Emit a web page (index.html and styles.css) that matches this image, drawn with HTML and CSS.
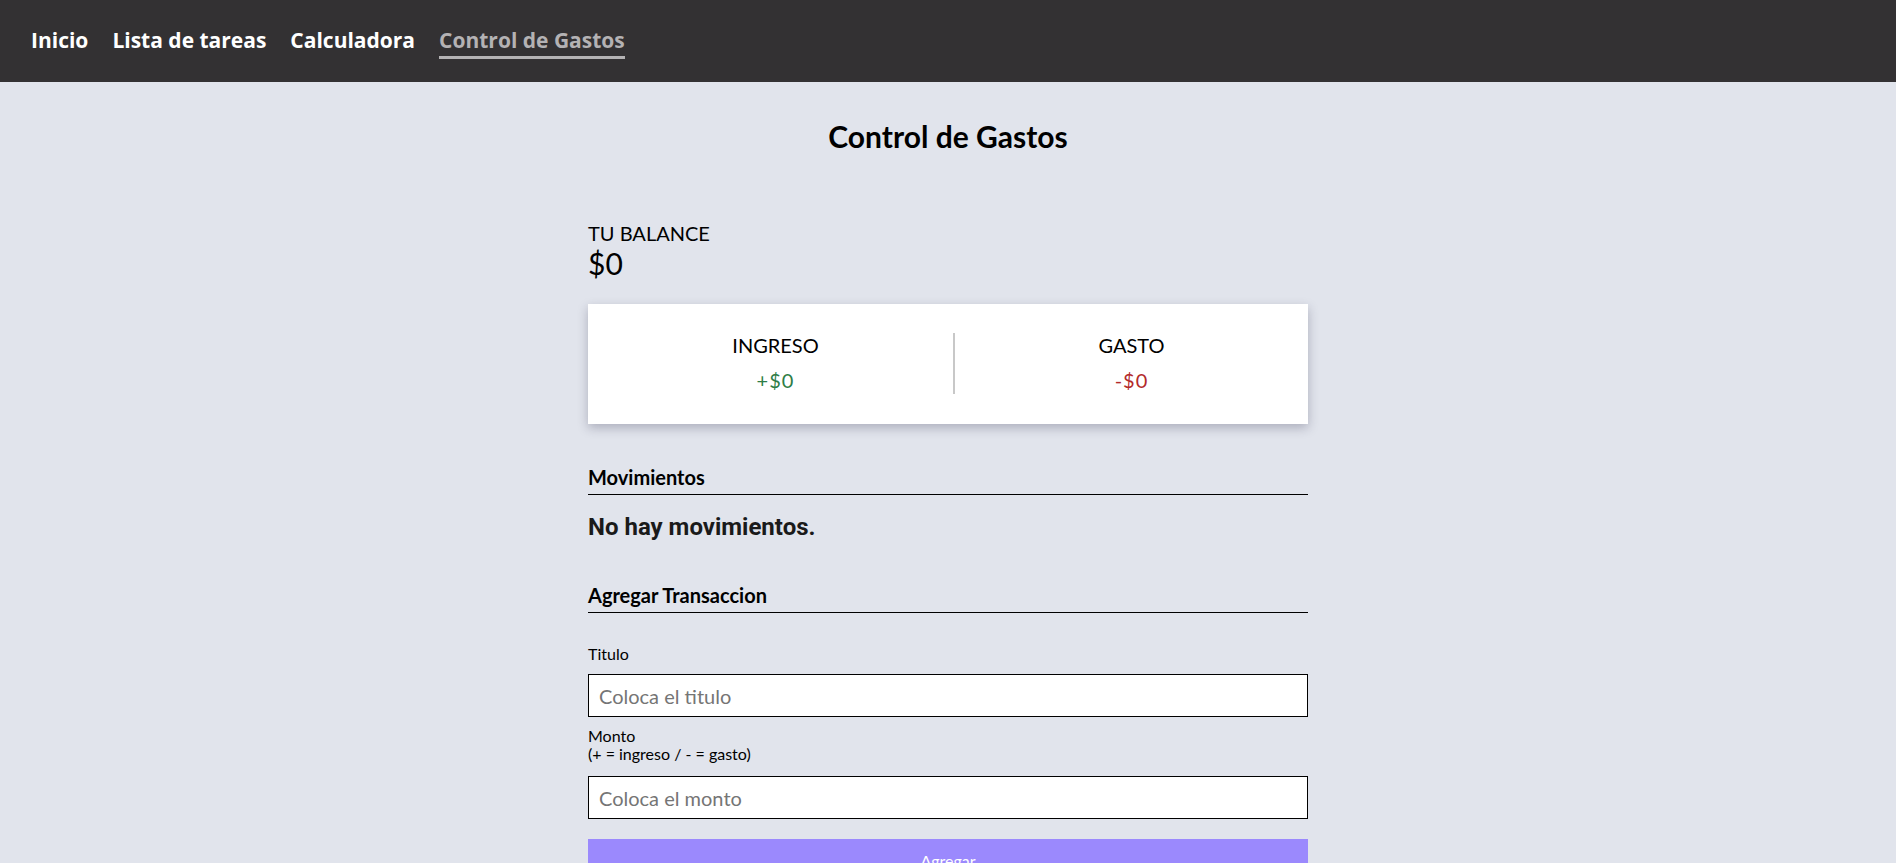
FILE: index.html
```html
<!DOCTYPE html>
<html lang="es">
<head>
<meta charset="utf-8">
<title>Control de Gastos</title>
<link rel="stylesheet" href="styles.css">
</head>
<body>
<nav class="navbar">
  <a class="nav-link" href="#">Inicio</a>
  <a class="nav-link" href="#">Lista de tareas</a>
  <a class="nav-link" href="#">Calculadora</a>
  <a class="nav-link active" href="#">Control de Gastos</a>
</nav>
<main class="app">
  <h1 class="title">Control de Gastos</h1>
  <section class="balance">
    <h4 class="balance-label">TU BALANCE</h4>
    <p class="balance-amount">$0</p>
  </section>
  <section class="summary">
    <div class="summary-col left">
      <h4 class="summary-label">INGRESO</h4>
      <p class="summary-value plus">+$0</p>
    </div>
    <div class="summary-divider"></div>
    <div class="summary-col">
      <h4 class="summary-label">GASTO</h4>
      <p class="summary-value minus">-$0</p>
    </div>
  </section>
  <h3 class="section-title">Movimientos</h3>
  <h3 class="empty">No hay movimientos.</h3>
  <h3 class="section-title add-title">Agregar Transaccion</h3>
  <form class="form">
    <label class="field-label" for="titulo">Titulo</label>
    <input class="field-input" id="titulo" type="text" placeholder="Coloca el titulo">
    <label class="field-label monto" for="monto">Monto<br>(+ = ingreso / - = gasto)</label>
    <input class="field-input monto-input" id="monto" type="text" placeholder="Coloca el monto">
    <button class="btn" type="button">Agregar</button>
  </form>
</main>
</body>
</html>
```
FILE: styles.css
```css
* { box-sizing: border-box; }
body {
  margin: 0;
  background: #e1e4ec;
  font-family: Lato, "Noto Sans", sans-serif;
  color: #000;
}
.navbar {
  height: 82px;
  background: #333133;
  display: flex;
  align-items: center;
  gap: 24px;
  padding-left: 31px;
}
.nav-link {
  font-family: "Open Sans", sans-serif;
  font-weight: bold;
  font-size: 21px;
  color: #fff;
  text-decoration: none;
  padding: 2px 0 2px;
  border-bottom: 3px solid transparent;
}
.nav-link.active {
  color: #b4b2b4;
  border-bottom-color: #b4b2b4;
}
.app {
  width: 720px;
  margin: 0 auto;
}
.title {
  font-size: 30px;
  font-weight: bold;
  text-align: center;
  margin: 36px 0 0;
  line-height: 36px;
}
.balance { margin-top: 67px; }
.balance-label {
  margin: 0;
  font-size: 20px;
  font-weight: normal;
  line-height: 24px;
}
.balance-amount {
  margin: 0;
  font-size: 30px;
  line-height: 36px;
}
.summary {
  margin-top: 23px;
  background: #fff;
  box-shadow: 0 4px 10px rgba(40, 40, 70, 0.28);
  display: flex;
  padding: 29px 0 0;
  height: 120px;
}
.summary-col {
  flex: 1;
  text-align: center;
  height: 61px;
}
.summary-col.left {
  flex: 0 0 365px;
  padding-left: 10px;
}
.summary-divider {
  width: 2px;
  height: 61px;
  background: #c8c8c8;
}
.summary-label {
  margin: 0;
  font-size: 20px;
  font-weight: normal;
  line-height: 24px;
}
.summary-value {
  margin: 11px 0 0;
  font-size: 20px;
  line-height: 24px;
  letter-spacing: 1px;
}
.plus { color: #2e7d46; }
.minus { color: #b32a2a; }
.section-title {
  margin: 41px 0 0;
  font-size: 20px;
  font-weight: bold;
  line-height: 24px;
  padding-bottom: 5px;
  border-bottom: 1px solid #000;
}
.empty {
  font-family: Roboto, sans-serif;
  font-size: 24px;
  font-weight: bold;
  margin: 19px 0 0;
  line-height: 27px;
  color: #1a1a1a;
}
.add-title { margin-top: 42px; }
.form {
  display: flex;
  flex-direction: column;
  padding-top: 32px;
}
.field-label {
  font-size: 16px;
  line-height: 18px;
}
.field-input {
  margin-top: 11px;
  height: 43px;
  border: 1px solid #000;
  padding: 0 10px;
  font-family: Lato, sans-serif;
  font-size: 20px;
  background: #fff;
  outline: none;
}
.field-input::placeholder { color: #757575; }
.monto { margin-top: 10px; }
.monto-input { margin-top: 13px; }
.btn {
  margin-top: 20px;
  border: none;
  background: #9b89fd;
  color: #fff;
  font-family: Lato, sans-serif;
  font-size: 16px;
  padding: 12px 0 17px;
  display: block;
  text-align: center;
  line-height: 19px;
}
```
